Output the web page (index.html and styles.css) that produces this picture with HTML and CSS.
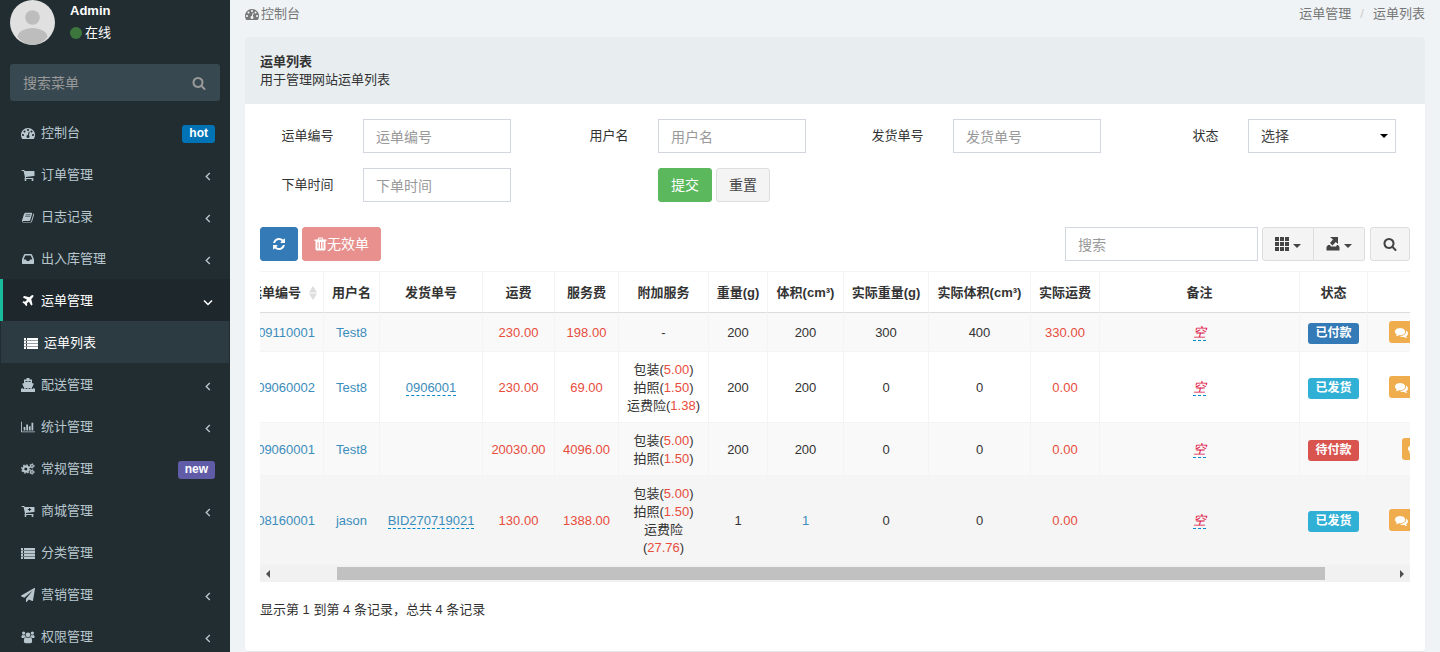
FILE: index.html
```html
<!DOCTYPE html>
<html lang="zh-CN">
<head>
<meta charset="utf-8">
<title>运单列表</title>
<link rel="stylesheet" href="styles.css">
</head>
<body>
<svg class="sprite" aria-hidden="true">
  <symbol id="i-dash" viewBox="0 0 1792 1792"><path d="M384 1152q0-53-37.500-90.500t-90.500-37.500-90.500 37.500-37.500 90.500 37.500 90.500 90.500 37.500 90.500-37.500 37.500-90.500zm192-448q0-53-37.500-90.500t-90.500-37.500-90.500 37.500-37.500 90.500 37.500 90.500 90.500 37.500 90.500-37.500 37.500-90.500zm428 481l101-382q6-26-7.500-48.500t-38.500-29.500-48 6.500-30 39.500l-101 382q-60 5-107 43.500t-63 98.500q-20 77 20 146t117 89 146-20 89-117q16-60-6-117t-72-91zm660-33q0-53-37.500-90.500t-90.500-37.500-90.500 37.500-37.500 90.500 37.500 90.500 90.500 37.500 90.500-37.500 37.500-90.500zm-640-640q0-53-37.500-90.500t-90.500-37.500-90.500 37.500-37.500 90.500 37.500 90.500 90.500 37.500 90.500-37.500 37.500-90.500zm448 192q0-53-37.500-90.500t-90.500-37.500-90.500 37.500-37.500 90.500 37.500 90.500 90.500 37.500 90.500-37.500 37.500-90.500zm320 448q0 261-141 483-19 29-54 29h-1402q-35 0-54-29-141-221-141-483 0-182 71-348t191-286 286-191 348-71 348 71 286 191 191 286 71 348z"/></symbol>
  <symbol id="i-cart" viewBox="0 0 1792 1792"><path d="M704 1536q0 52-38 90t-90 38-90-38-38-90 38-90 90-38 90 38 38 90zm896 0q0 52-38 90t-90 38-90-38-38-90 38-90 90-38 90 38 38 90zm128-1088v512q0 24-16.500 42.500t-40.500 21.500l-1044 122q13 60 13 70 0 16-24 64h920q26 0 45 19t19 45-19 45-45 19h-1024q-26 0-45-19t-19-45q0-11 8-31.500t16-36 21.500-40 15.500-29.500l-177-823h-204q-26 0-45-19t-19-45 19-45 45-19h256q16 0 28.500 6.500t19.500 15.500 13 24.500 8 26 5.500 29.500 4.500 26h1201q26 0 45 19t19 45z"/></symbol>
  <symbol id="i-cartplus" viewBox="0 0 1792 1792"><path fill-rule="evenodd" d="M704 1536a128 128 0 1 1-256 0 128 128 0 0 1 256 0zm896 0a128 128 0 1 1-256 0 128 128 0 0 1 256 0zM128 256h256q60 0 80 128h1200q64 0 64 64v512q0 58-57 64L627 1146q13 60 13 70 0 16-24 64h920q64 0 64 64t-64 64H512q-64 0-64-64 0-24 61-137L332 384H128q-64 0-64-64t64-64zm900 240v140H880v120h148v140h130V756h148V636h-148V496z"/></symbol>
  <symbol id="i-book" viewBox="0 0 1792 1792"><path fill-rule="evenodd" d="M1640 478q60 48 34 140l-250 822q-46 148-200 160H330q-150 0-206-140-18-70 4-120l260-830q40-150 180-170h780q90 0 80 120l-252 850q-40 90-130 90H236q-50 20 10 90 32 30 84 30h890q60 0 86-70l240-850q20-60 8-112zM616 560l-22 80h640l24-80zm-56 190l-24 80h640l24-80z"/></symbol>
  <symbol id="i-inbox" viewBox="0 0 1792 1792"><path d="M1151 960h316q-1-3-2.500-8.500t-2.500-7.500l-212-496h-708l-212 496q-1 3-2.500 8.500t-2.500 7.500h316l95 192h320zm513 30v482q0 26-19 45t-45 19h-1408q-26 0-45-19t-19-45v-482q0-62 25-123l238-552q10-25 36.500-42t52.500-17h832q26 0 52.500 17t36.500 42l238 552q25 61 25 123z"/></symbol>
  <symbol id="i-plane" viewBox="0 0 1792 1792"><path d="M1568 160q44 52 12 148t-108 172l-161 161 160 696q5 19-12 33l-128 96q-7 6-19 6-4 0-7-1-15-3-21-16l-279-508-259 259 53 194q5 17-8 31l-96 96q-9 9-23 9h-2q-15-2-24-13l-189-252-252-189q-11-7-13-23-1-13 9-25l96-97q9-9 23-9 6 0 8 1l194 53 259-259-508-279q-14-8-17-24-2-16 9-27l128-128q14-13 30-8l665 159 160-160q76-76 172-108t148 12z"/></symbol>
  <symbol id="i-list" viewBox="0 0 14 14"><path d="M0 2h2v2H0zm3 0h11v2H3zM0 5h2v2H0zm3 0h11v2H3zM0 8h2v2H0zm3 0h11v2H3zM0 11h2v2H0zm3 0h11v2H3z"/><path opacity=".5" d="M0 4h14v1H0zm0 3h14v1H0zm0 3h14v1H0z"/></symbol>
  <symbol id="i-ship" viewBox="0 0 14 14"><path d="M5.500 0h3v1.500H11V5l1.800.8-1.900 4.200H3.100L1.200 5.800 3 5V1.500h2.500zM4.500 3v1.300L7 3.200l2.500 1.100V3zM0 11l1-1 1.500 1L4 10l1.500 1L7 10l1.500 1 1.500-1 1.500 1 1.500-1 1 1v3H0z"/></symbol>
  <symbol id="i-chart" viewBox="0 0 16 14"><path d="M0 1h1v11h15v1H0zm3 6h2v4H3zm3-3h2v7H6zm3 2h2v5H9zm3-4h2v9h-2z"/></symbol>
  <symbol id="i-cogs" viewBox="0 0 16 14"><g fill="none" stroke="currentColor"><circle cx="5.500" cy="7" r="3" stroke-width="2.400"/><circle cx="5.500" cy="7" r="4.700" stroke-width="1.400" stroke-dasharray="1.850 1.840"/><circle cx="12.500" cy="3.500" r="1.600" stroke-width="1.400"/><circle cx="12.500" cy="3.500" r="2.500" stroke-width="1" stroke-dasharray="1.300 1.320"/><circle cx="12.500" cy="10.500" r="1.600" stroke-width="1.400"/><circle cx="12.500" cy="10.500" r="2.500" stroke-width="1" stroke-dasharray="1.300 1.320"/></g></symbol>
  <symbol id="i-send" viewBox="0 0 1792 1792"><path d="M1764 11q33 24 27 64l-256 1536q-5 29-32 45-14 8-31 8-11 0-24-5l-453-185-242 295q-18 23-49 23-13 0-22-4-19-7-30.500-23.500t-11.500-36.500v-349l864-1059-1069 925-395-162q-37-14-40-55-2-40 32-59l1664-960q15-9 32-9 20 0 36 11z"/></symbol>
  <symbol id="i-users" viewBox="0 0 16 14"><circle cx="3" cy="2.500" r="1.900"/><circle cx="13" cy="2.500" r="1.900"/><circle cx="8" cy="4.500" r="2.700"/><path d="M.5 7.500C.5 5.500 1 4.700 1.700 4.700q1.600.8 2.900 0Q4.800 6.300 5.500 7 4 7 3.500 8H1.300Q.5 8 .5 7.500zm15 0c0-2-.5-2.800-1.200-2.800q-1.600.8-2.900 0-.2 1.600-.9 2.300 1.500 0 2 1h2.200q.8 0 .8-.5zM3.300 12c0-3.500.8-4.800 2.200-4.800q2.500 1.400 5 0c1.400 0 2.200 1.300 2.200 4.800q0 2-2 2H5.300q-2 0-2-2z"/></symbol>
  <symbol id="i-search" viewBox="0 0 1792 1792"><path d="M1216 832q0-185-131.500-316.500t-316.500-131.500-316.500 131.500-131.500 316.500 131.500 316.500 316.500 131.500 316.500-131.500 131.500-316.500zm512 832q0 52-38 90t-90 38q-54 0-90-38l-343-342q-179 124-399 124-143 0-273.500-55.500t-225-150-150-225-55.500-273.500 55.500-273.500 150-225 225-150 273.500-55.500 273.500 55.500 225 150 150 225 55.500 273.500q0 220-124 399l343 343q37 37 37 90z"/></symbol>
  <symbol id="i-refresh" viewBox="0 0 1792 1792"><path d="M1639 1056q0 5-1 7-64 268-268 434.500t-478 166.500q-146 0-282.500-55t-243.500-157l-129 129q-19 19-45 19t-45-19-19-45v-448q0-26 19-45t45-19h448q26 0 45 19t19 45-19 45l-137 137q71 66 161 102t187 36q134 0 250-65t186-179q11-17 53-117 8-23 30-23h192q13 0 22.500 9.500t9.500 22.500zm25-800v448q0 26-19 45t-45 19h-448q-26 0-45-19t-19-45 19-45l138-138q-148-137-349-137-134 0-250 65t-186 179q-11 17-53 117-8 23-30 23h-199q-13 0-22.500-9.500t-9.500-22.500v-7q65-268 270-434.500t480-166.500q146 0 284 55.500t245 156.500l130-129q19-19 45-19t45 19 19 45z"/></symbol>
  <symbol id="i-trash" viewBox="0 0 12 14"><path fill-rule="evenodd" d="M4 .5h4L8.800 2.500H12V4h-1v8q0 1.500-1.500 1.500h-7Q1 13.500 1 12V4H0V2.500h3.200zm.8 1l-.4 1h3.200l-.4-1zM3 5v6.500h1V5zm2.500 0v6.500h1V5zM8 5v6.500h1V5z"/></symbol>
  <symbol id="i-comments" viewBox="0 0 1792 1792"><path d="M1408 768q0 139-94 257t-256.500 186.500-353.500 68.500q-86 0-176-16-124 88-278 128-36 9-86 16h-3q-11 0-20.500-8t-11.500-21q-1-12 10-28 50-54 75-88t45-82q-124-72-195-177t-71-224q0-139 94-257t256.500-186.500 353.500-68.500 353.500 68.500 256.500 186.500 94 257zm384 256q0 120-71 224.500t-195 176.500q20 48 46 83t72 87q12 14 11 29-3 14-13 22t-22 7q-50-7-86-16-154-40-278-128-90 16-176 16-271 0-472-132 58 4 88 4 161 0 309-45t264-129q125-92 192-212t67-254q0-77-23-152 129 71 204 178t75 230z"/></symbol>
  <symbol id="i-grid" viewBox="0 0 14 14"><path d="M0 0h4v4H0zm5 0h4v4H5zm5 0h4v4h-4zM0 5h4v4H0zm5 0h4v4H5zm5 0h4v4h-4zM0 10h4v4H0zm5 0h4v4H5zm5 0h4v4h-4z"/></symbol>
  <symbol id="i-export" viewBox="0 0 14 14"><path d="M4 0h8v7L9.800 5 6.500 8.500 4 6 7 2.600zM2 8h2l1 1.500h5L11 8h1l1.500 2v3.500H.5V10z"/></symbol>
  <symbol id="i-caret" viewBox="0 0 8 4"><path d="M0 0h8L4 4z"/></symbol>
  <symbol id="i-left" viewBox="0 0 6 10"><path d="M5 1L1 5l4 4" fill="none" stroke="currentColor" stroke-width="1.500"/></symbol>
  <symbol id="i-down" viewBox="0 0 10 6"><path d="M1 1l4 4 4-4" fill="none" stroke="currentColor" stroke-width="1.500"/></symbol>
</svg>
<div class="layout">
  <aside class="sidebar">
    <div class="user">
      <svg class="avatar" viewBox="0 0 45 45" role="img" aria-label="Admin"><defs><clipPath id="round"><circle cx="22.500" cy="22.500" r="22.500"/></clipPath></defs><g clip-path="url(#round)"><path fill="#e0e0e0" d="M0 0h45v45H0z"/><circle cx="22.500" cy="17.500" r="7.300" fill="#bdbdbd"/><path fill="#bdbdbd" d="M7.500 37c0-5.500 8-9 15-9s15 3.500 15 9c-3 4-9 8-15 8s-12-4-15-8z"/></g></svg>
      <div class="who"><strong>Admin</strong><a href="#"><i class="dot"></i>在线</a></div>
    </div>
    <form class="menu-search"><input type="text" placeholder="搜索菜单" aria-label="搜索菜单"><button type="button" aria-label="搜索"><svg class="ic"><use href="#i-search"/></svg></button></form>
    <nav class="menu">
      <a href="#"><svg class="ic"><use href="#i-dash"/></svg><span>控制台</span><b class="tag hot">hot</b></a>
      <a href="#"><svg class="ic"><use href="#i-cart"/></svg><span>订单管理</span><svg class="arrow"><use href="#i-left"/></svg></a>
      <a href="#"><svg class="ic"><use href="#i-book"/></svg><span>日志记录</span><svg class="arrow"><use href="#i-left"/></svg></a>
      <a href="#"><svg class="ic"><use href="#i-inbox"/></svg><span>出入库管理</span><svg class="arrow"><use href="#i-left"/></svg></a>
      <a href="#" class="active"><svg class="ic"><use href="#i-plane"/></svg><span>运单管理</span><svg class="arrow"><use href="#i-down"/></svg></a>
      <a href="#" class="sub"><svg class="ic"><use href="#i-list"/></svg><span>运单列表</span></a>
      <a href="#"><svg class="ic"><use href="#i-ship"/></svg><span>配送管理</span><svg class="arrow"><use href="#i-left"/></svg></a>
      <a href="#"><svg class="ic"><use href="#i-chart"/></svg><span>统计管理</span><svg class="arrow"><use href="#i-left"/></svg></a>
      <a href="#"><svg class="ic"><use href="#i-cogs"/></svg><span>常规管理</span><b class="tag new">new</b></a>
      <a href="#"><svg class="ic"><use href="#i-cartplus"/></svg><span>商城管理</span><svg class="arrow"><use href="#i-left"/></svg></a>
      <a href="#"><svg class="ic"><use href="#i-list"/></svg><span>分类管理</span></a>
      <a href="#"><svg class="ic"><use href="#i-send"/></svg><span>营销管理</span><svg class="arrow"><use href="#i-left"/></svg></a>
      <a href="#"><svg class="ic"><use href="#i-users"/></svg><span>权限管理</span><svg class="arrow"><use href="#i-left"/></svg></a>
    </nav>
  </aside>
  <main class="main">
    <header class="crumbs"><a href="#"><svg class="ic"><use href="#i-dash"/></svg>控制台</a><div><a href="#">运单管理</a><i>/</i><a href="#">运单列表</a></div></header>
    <section class="panel">
      <div class="heading"><strong>运单列表</strong><p>用于管理网站运单列表</p></div>
      <form class="filters">
        <div class="field"><label for="f1">运单编号</label><input class="control" id="f1" type="text" placeholder="运单编号"></div>
        <div class="field"><label for="f2">用户名</label><input class="control" id="f2" type="text" placeholder="用户名"></div>
        <div class="field"><label for="f3">发货单号</label><input class="control" id="f3" type="text" placeholder="发货单号"></div>
        <div class="field"><label for="f4">状态</label><div class="pick"><select class="control" id="f4"><option>选择</option></select><svg class="caret"><use href="#i-caret"/></svg></div></div>
        <div class="field"><label for="f5">下单时间</label><input class="control" id="f5" type="text" placeholder="下单时间"></div>
        <div class="field"><div class="actions"><button type="button" class="btn success">提交</button><button type="button" class="btn">重置</button></div></div>
      </form>
      <div class="content">
        <div class="toolbar">
          <button type="button" class="btn primary" aria-label="刷新"><svg class="ic"><use href="#i-refresh"/></svg></button>
          <button type="button" class="btn danger" disabled><svg class="trash"><use href="#i-trash"/></svg>无效单</button>
          <input class="control find" type="text" placeholder="搜索" aria-label="搜索">
          <div class="group"><button type="button" class="btn" aria-label="列"><svg class="ic"><use href="#i-grid"/></svg><svg class="caret"><use href="#i-caret"/></svg></button><button type="button" class="btn" aria-label="导出"><svg class="ic"><use href="#i-export"/></svg><svg class="caret"><use href="#i-caret"/></svg></button></div>
          <button type="button" class="btn last" aria-label="搜索"><svg class="ic"><use href="#i-search"/></svg></button>
        </div>
        <div class="scroller">
          <table>
            <colgroup><col class="w134"><col class="w56"><col class="w103"><col class="w72"><col class="w64"><col class="w90"><col class="w59"><col class="w76"><col class="w85"><col class="w102"><col class="w69"><col class="w200"><col class="w68"><col></colgroup>
            <thead><tr><th class="no">运单编号<svg class="sort" viewBox="0 0 8 14"><path d="M0 6.500L4 0l4 6.500zm0 1h8L4 14z"/></svg></th><th>用户名</th><th>发货单号</th><th>运费</th><th>服务费</th><th>附加服务</th><th>重量(g)</th><th>体积(cm³)</th><th>实际重量(g)</th><th>实际体积(cm³)</th><th>实际运费</th><th>备注</th><th>状态</th><th></th></tr></thead>
            <tbody>
              <tr><td class="no"><a href="#">09110001</a></td><td><a href="#">Test8</a></td><td></td><td class="red">230.00</td><td class="red">198.00</td><td>-</td><td>200</td><td>200</td><td>300</td><td>400</td><td class="red">330.00</td><td><a href="#" class="edit empty">空</a></td><td><span class="state paid">已付款</span></td><td class="ops"><button type="button" aria-label="留言"><svg><use href="#i-comments"/></svg></button></td></tr>
              <tr><td class="no"><a href="#">09060002</a></td><td><a href="#">Test8</a></td><td><a href="#" class="edit">0906001</a></td><td class="red">230.00</td><td class="red">69.00</td><td>包装(<em>5.00</em>)<br>拍照(<em>1.50</em>)<br>运费险(<em>1.38</em>)</td><td>200</td><td>200</td><td>0</td><td>0</td><td class="red">0.00</td><td><a href="#" class="edit empty">空</a></td><td><span class="state sent">已发货</span></td><td class="ops"><button type="button" aria-label="留言"><svg><use href="#i-comments"/></svg></button></td></tr>
              <tr><td class="no"><a href="#">09060001</a></td><td><a href="#">Test8</a></td><td></td><td class="red">20030.00</td><td class="red">4096.00</td><td>包装(<em>5.00</em>)<br>拍照(<em>1.50</em>)</td><td>200</td><td>200</td><td>0</td><td>0</td><td class="red">0.00</td><td><a href="#" class="edit empty">空</a></td><td><span class="state due">待付款</span></td><td class="ops short"><button type="button" aria-label="留言"><svg><use href="#i-comments"/></svg></button></td></tr>
              <tr class="hover"><td class="no"><a href="#">08160001</a></td><td><a href="#">jason</a></td><td><a href="#" class="edit">BID270719021</a></td><td class="red">130.00</td><td class="red">1388.00</td><td>包装(<em>5.00</em>)<br>拍照(<em>1.50</em>)<br>运费险<br>(<em>27.76</em>)</td><td>1</td><td><a href="#">1</a></td><td>0</td><td>0</td><td class="red">0.00</td><td><a href="#" class="edit empty">空</a></td><td><span class="state sent">已发货</span></td><td class="ops"><button type="button" aria-label="留言"><svg><use href="#i-comments"/></svg></button></td></tr>
            </tbody>
          </table>
        </div>
        <div class="hbar"><svg viewBox="0 0 4 8"><path d="M4 0v8L0 4z"/></svg><div class="track"><div class="thumb"></div></div><svg viewBox="0 0 4 8"><path d="M0 0v8l4-4z"/></svg></div>
        <p class="summary">显示第 1 到第 4 条记录，总共 4 条记录</p>
      </div>
    </section>
  </main>
</div>
</body>
</html>
```
FILE: styles.css
```css
* { box-sizing: border-box; }
body { margin: 0; font: 13px/18px "Liberation Sans", "Noto Sans CJK SC", sans-serif; color: #333; background: #eff3f6; }
a { color: #3c8dbc; text-decoration: none; }
p { margin: 0; }
button, input, select { font: inherit; margin: 0; }
svg { fill: currentColor; flex: none; }
.sprite { position: absolute; width: 0; height: 0; }
.ic { width: 14px; height: 14px; }
.layout { display: flex; height: 100vh; overflow: hidden; }

.sidebar { width: 230px; flex: none; background: #222d32; overflow: hidden; }
.user { display: flex; gap: 15px; height: 64px; padding-left: 10px; color: #fff; }
.avatar { width: 45px; height: 45px; }
.who { display: flex; flex-direction: column; gap: 4px; padding-top: 2px; }
.who strong { font-size: 13px; }
.who a { display: flex; align-items: center; gap: 3px; color: #fff; }
.dot { width: 12px; height: 12px; border-radius: 50%; background: #3c763d; }
.menu-search { display: flex; align-items: center; margin: 0 10px 10px; height: 37px; padding: 0 14px 0 13px; border-radius: 3px; background: #374850; }
.menu-search input { flex: 1; min-width: 0; padding: 0; border: 0; outline: 0; background: none; font-size: 14px; color: #fff; }
.menu-search button { display: flex; padding: 0; border: 0; background: none; color: #999; }
::placeholder { color: #999; opacity: 1; }
.menu a { display: flex; align-items: center; height: 42px; padding: 1px 15px 0 18px; border-left: 3px solid transparent; color: #b8c7ce; }
.menu a span { flex: 1; padding-left: 6px; }
.menu .active { color: #fff; background: #1e282c; border-left-color: #18bc9c; }
.menu .sub { margin: 0 1px; padding-left: 20px; color: #fff; background: #2c3b41; }
.arrow { width: 10px; height: 9px; margin-top: 4px; margin-right: 2px; }
.tag { height: 18px; margin-top: 2px; padding: 0 7px; border-radius: 3px; color: #fff; font-size: 12px; line-height: 17px; }
.hot { background: #0073b7; }
.new { background: #605ca8; }

.main { flex: 1; min-width: 0; padding: 0 15px; }
.crumbs { display: flex; justify-content: space-between; height: 37px; padding-top: 5px; }
.crumbs a { color: #777; }
.crumbs .ic { margin-right: 2px; vertical-align: -3px; }
.crumbs i { padding: 0 9px; color: #ccc; font-style: normal; }
.panel { background: #fff; border-radius: 3px; padding-bottom: 32px; box-shadow: 0 1px 1px rgba(0,0,0,.05); }
.heading { padding: 16px 15px 15px; background: #e8edf0; border-radius: 3px 3px 0 0; }
.heading strong { display: block; }
.filters { display: grid; grid-template-columns: repeat(4, 1fr); row-gap: 15px; padding: 15px 0 25px; }
.field { display: grid; grid-template-columns: 30% 50%; column-gap: 10%; }
.field label { padding-top: 8px; text-align: right; }
.control { width: 100%; height: 34px; padding: 2px 12px 0; border: 1px solid #d2d6de; border-radius: 0; background: #fff; color: #555; font-size: 14px; outline: 0; }
.pick { position: relative; }
.pick .caret { position: absolute; right: 8px; top: 12px; color: #000; }
select.control { padding: 0 12px; color: #444; appearance: none; }
.actions { grid-column: 2; display: flex; gap: 4px; }
.btn { display: inline-flex; align-items: center; justify-content: center; height: 34px; padding: 0 12px; border: 1px solid #ddd; border-radius: 3px; background: #f4f4f4; color: #444; font-size: 14px; white-space: nowrap; }
.success { background: #5cb85c; border-color: #5cb85c; color: #fff; }
.primary { background: #337ab7; border-color: #337ab7; color: #fff; padding: 0 11px; }
.danger { background: #e7908e; border-color: #e7908e; color: #fff; padding: 0 11px; }
.trash { width: 13px; height: 14px; }
.content { padding: 0 15px; }
.toolbar { display: flex; gap: 4px; padding-bottom: 10px; }
.find { width: 193px; margin-left: auto; }
.group { display: flex; }
.group .btn { width: 52px; padding: 0; gap: 4px; }
.group .btn:first-child { border-radius: 3px 0 0 3px; }
.group .btn:last-child { width: 51px; margin-right: 1px; border-radius: 0 3px 3px 0; border-left: 0; }
.caret { width: 8px; height: 4px; margin-top: 3px; }
.last { width: 40px; }

.scroller { overflow: hidden; }
table { width: calc(100% + 149px); margin-left: -70px; table-layout: fixed; border-collapse: separate; border-spacing: 0; text-align: center; }
.w134 { width: 134px; } .w56 { width: 56px; } .w103 { width: 103px; } .w72 { width: 72px; } .w64 { width: 64px; }
.w90 { width: 90px; } .w59 { width: 59px; } .w76 { width: 76px; } .w85 { width: 85px; } .w102 { width: 102px; }
.w69 { width: 69px; } .w200 { width: 200px; } .w68 { width: 68px; }
th { height: 42px; padding: 1px 0 0; border: 1px solid #f4f4f4; border-width: 1px 1px 1px 0; border-bottom-color: #ddd; white-space: nowrap; }
td { padding: 9px 0 7px; border: 1px solid #f4f4f4; border-width: 0 1px 1px 0; white-space: nowrap; }
tbody tr:nth-child(odd) { background: #f9f9f9; }
tbody .hover { background: #f5f5f5; }
.no { text-align: right; padding-right: 8px; }
th.no { padding-right: 6px; }
.sort { width: 8px; height: 14px; margin-left: 8px; color: #ddd; vertical-align: -3px; }
.red, td em { color: #e74c3c; font-style: normal; }
.edit { border-bottom: 1px dashed #0088cc; }
.empty { color: #dd1144; font-style: italic; }
.state { display: block; width: 51px; height: 21px; margin: 1px auto 0; border-radius: 3px; color: #fff; font-size: 12px; font-weight: bold; line-height: 20px; }
.paid { background: #337ab7; }
.sent { background: #31b0d5; }
.due { background: #d9534f; }
.ops { text-align: left; padding: 8px 0 8px 21px; }
.ops.short { padding-left: 34px; }
.ops button { display: flex; align-items: center; justify-content: center; width: 25px; height: 22px; padding: 0; border: 0; border-radius: 3px; background: #f0ad4e; color: #fff; }
.ops svg { width: 13px; height: 13px; }
.hbar { display: flex; align-items: center; height: 17px; padding: 0 6px; background: #f1f1f1; color: #505050; }
.hbar svg { width: 4px; height: 8px; }
.track { flex: 1; height: 13px; margin: 0 7px; }
.thumb { width: 88.5%; height: 13px; margin-left: 5.4%; background: #c1c1c1; }
.summary { padding-top: 19px; }
```
